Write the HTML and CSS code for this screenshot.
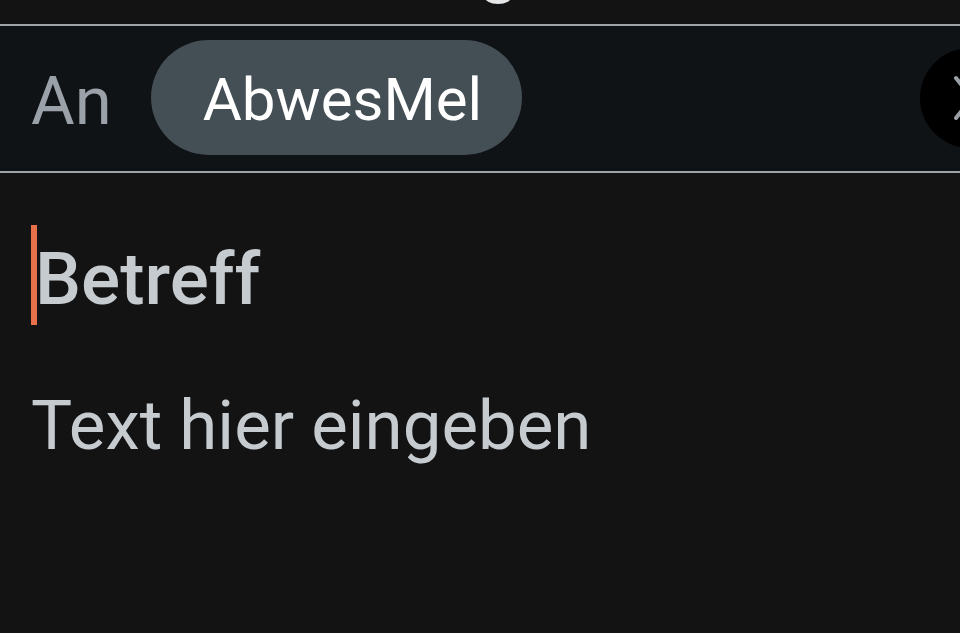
FILE: index.html
```html
<!DOCTYPE html>
<html lang="de">
<head>
    <meta charset="UTF-8">
    <meta name="viewport" content="width=device-width, initial-scale=1.0">
    <title>Neue E-Mail</title>
    <link rel="stylesheet" href="styles.css">
</head>
<body>
    <!-- Rest of the header above (cut off) -->
    <div class="top-strip">
        <span class="top-blob"></span>
    </div>

    <!-- Recipient row -->
    <div class="recipient-row">
        <span class="recipient-label">An</span>
        <span class="chip">AbwesMel</span>
        <button class="expand-button" aria-label="Mehr">
            <svg width="40" height="60" viewBox="0 0 40 60">
                <path d="M6 10 L22 30 L6 50" fill="none" stroke="#9aa0a6" stroke-width="4" stroke-linecap="round"/>
            </svg>
        </button>
    </div>

    <!-- Message body -->
    <div class="compose">
        <div class="subject">
            <span class="caret"></span>
            <span>Betreff</span>
        </div>
        <div class="body-text">Text hier eingeben</div>
    </div>
</body>
</html>
```

FILE: styles.css
```css
body {
    margin: 0;
    font-family: Roboto, "Noto Sans", sans-serif;
    background-color: #131313;
    width: 960px;
    height: 633px;
    overflow: hidden;
}

.top-strip {
    height: 24px;
    position: relative;
    border-bottom: 2px solid #9ea3a8;
}

.top-blob {
    position: absolute;
    left: 484px;
    top: -12px;
    width: 28px;
    height: 16px;
    border-radius: 50%;
    background-color: #e4e6e8;
}

.recipient-row {
    display: flex;
    align-items: center;
    height: 145px;
    padding-left: 31px;
    background-color: #101316;
    border-bottom: 2px solid #9ea3a8;
    position: relative;
    overflow: hidden;
}

.recipient-label {
    font-size: 67px;
    color: #9ba1a8;
    margin-right: 39px;
    line-height: 1;
    padding-top: 6px;
}

.chip {
    display: flex;
    align-items: center;
    height: 115px;
    padding: 6px 40px 0 52px;
    box-sizing: border-box;
    border-radius: 58px;
    background-color: #444e55;
    color: #ffffff;
    font-size: 60px;
    line-height: 1;
    margin-top: -3px;
}

.expand-button {
    position: absolute;
    left: 920px;
    top: 22px;
    width: 100px;
    height: 100px;
    border-radius: 50%;
    border: none;
    padding: 0 0 0 30px;
    background-color: #000000;
    display: flex;
    align-items: center;
}

.compose {
    padding: 52px 0 0 31px;
}

.subject {
    display: flex;
    align-items: center;
    height: 100px;
    font-size: 73px;
    font-weight: 500;
    color: #c6cbd0;
}

.subject span:last-child {
    padding-top: 8px;
}

.caret {
    width: 6px;
    height: 100px;
    background-color: #e8704a;
    margin-right: -2px;
}

.body-text {
    margin-top: 66px;
    font-size: 69px;
    color: #c6cbd0;
    line-height: 1;
}
```
